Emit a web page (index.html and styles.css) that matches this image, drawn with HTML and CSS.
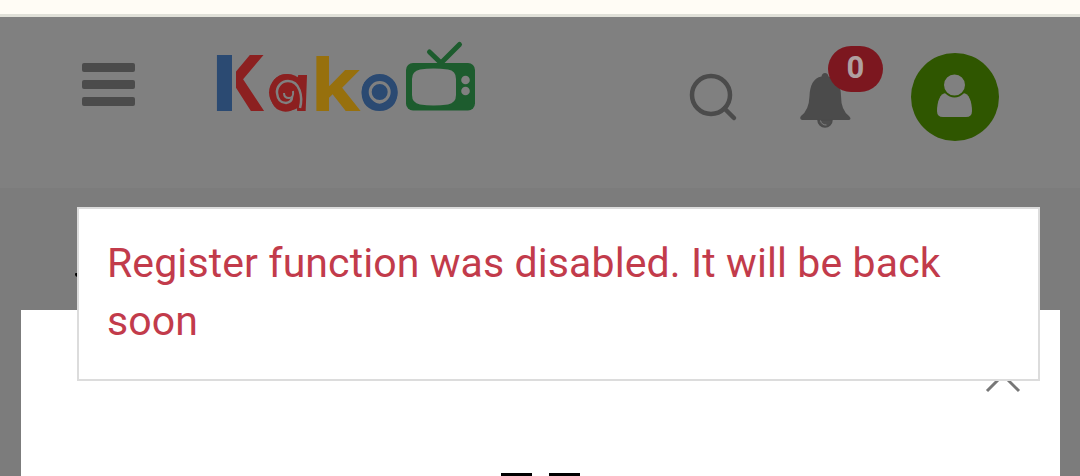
FILE: index.html
```
<!DOCTYPE html>
<html lang="en">
<head>
    <meta charset="UTF-8">
    <meta name="viewport" content="width=device-width, initial-scale=1.0">
    <title>Kako TV</title>
    <link rel="stylesheet" href="styles.css">
</head>
<body>

    <div class="top-strip"></div>

    <header>
        <div class="menu-button">
            <span></span>
            <span></span>
            <span></span>
        </div>

        <svg class="logo" width="277" height="125" viewBox="205 17 277 125">
            <defs>
                <linearGradient id="twoTone" gradientUnits="userSpaceOnUse" x1="217" y1="0" x2="265" y2="0">
                    <stop offset="0.32" stop-color="#2b4a72"/>
                    <stop offset="0.32" stop-color="#808080"/>
                    <stop offset="0.4" stop-color="#808080"/>
                    <stop offset="0.4" stop-color="#8c2020"/>
                </linearGradient>
            </defs>
            <g class="logo-text">
                <text x="212" y="111" font-size="77" textLength="54" lengthAdjust="spacingAndGlyphs" fill="url(#twoTone)">K</text>
                <text class="round-a" transform="translate(270 110.500) skewX(12)" font-size="66" textLength="46" lengthAdjust="spacingAndGlyphs" fill="#8c2020">a</text>
                <text x="311" y="111" font-size="75" textLength="50" lengthAdjust="spacingAndGlyphs" fill="#97700d">k</text>
                <text x="359" y="110" font-size="64" textLength="41" lengthAdjust="spacingAndGlyphs" fill="#2b4a72">o</text>
            </g>
            <rect x="217" y="55" width="15" height="56" fill="#2b4a72"/>
            <!-- swirl inside the a -->
            <circle cx="287.500" cy="92.500" r="18.500" fill="#8c2020"/>
            <path d="M300 108C303 97 300 81 288 81A11 11 0 0 0 277 93Q278 103 286 103Q292 102 292 97" fill="none" stroke="#808080" stroke-width="2.500"/>
            <path d="M284 93q0 5 5 5t4-7" fill="none" stroke="#808080" stroke-width="2"/>
            <circle cx="379.700" cy="92" r="15" fill="none" stroke="#2b4a72" stroke-width="6"/>
            <circle cx="379.700" cy="92" r="9.500" fill="#2b4a72" stroke="#808080" stroke-width="3"/>
            <path d="M429.500 52L441 63L459.500 44.500" fill="none" stroke="#1d5c2e" stroke-width="5" stroke-linecap="round"/>
            <rect x="406" y="63" width="69" height="47.500" rx="7" fill="#1d5c2e"/>
            <path d="M420 69.500Q433 67.500 448 69.500Q456 70.500 456 79V95Q456 103 448 104.500Q433 106.500 420 104.500Q412 103 412 95V79Q412 71 420 69.500Z" fill="#808080"/>
            <circle cx="465.500" cy="80" r="4.300" fill="#808080"/>
            <circle cx="465.500" cy="91" r="4.300" fill="#808080"/>
        </svg>

        <svg class="search" width="52" height="52" viewBox="688 72 52 52">
            <circle cx="711" cy="95" r="19" fill="none" stroke="#4b4b4b" stroke-width="4.500"/>
            <path d="M724.500 108.500L734 118" stroke="#4b4b4b" stroke-width="4.500" stroke-linecap="round"/>
        </svg>

        <div class="notifications">
            <svg width="52" height="58" viewBox="799 71 52 58">
                <path d="M825 73q3 0 3.500 3.500C838 78 841 86 841 96Q841 110 849 116Q852 119 849 120H802Q799 119 801 116Q809 110 809.500 96C810 86 813 78 821.500 76.500Q822 73 825 73Z" fill="#4b4b4b"/>
                <path d="M818 120a7 7 0 0 0 14 0z" fill="#4f4f4f" stroke="#4b4b4b" stroke-width="1.500"/>
                <path d="M820.500 120.500q1 4.500 6 4.500" fill="none" stroke="#808080" stroke-width="1"/>
            </svg>
            <span class="badge">0</span>
        </div>

        <div class="avatar">
            <svg width="36" height="46" viewBox="937 73 36 46">
                <path d="M946 93H963C969 93 972 102 972 111Q972 117 966 117H943Q937 117 937 111C937 102 940 93 946 93Z" fill="#808080"/>
                <circle cx="954.500" cy="85" r="11.500" fill="#808080" stroke="#2f5600" stroke-width="2"/>
            </svg>
        </div>
    </header>

    <main>
        <span class="heading-mark"></span>
        <div class="panel">
            <div class="panel-title"><span></span><span></span></div>
        </div>
        <svg class="collapse" width="38" height="22" viewBox="0 0 38 22">
            <path d="M3 19L19 3L35 19" fill="none" stroke="#777" stroke-width="3"/>
        </svg>
        <div class="message">Register function was disabled. It will be back soon</div>
    </main>

</body>
</html>
```
FILE: styles.css
```
* {
    box-sizing: border-box;
}

body {
    margin: 0;
    height: 476px;
    overflow: hidden;
    background-color: #7c7c7c;
    font-family: Roboto, sans-serif;
}

.top-strip {
    height: 17px;
    background-color: #fffcf5;
    border-bottom: 3px solid #e0e0d8;
}

header {
    display: flex;
    align-items: flex-start;
    height: 171px;
    padding-left: 82px;
    background-color: #808080;
}

.menu-button {
    display: flex;
    flex-direction: column;
    gap: 8px;
    width: 53px;
    margin-top: 46px;
}

.menu-button span {
    height: 9px;
    border-radius: 2px;
    background-color: #4b4b4b;
}

.logo {
    margin-left: 70px;
    overflow: visible;
}

.logo-text {
    font-family: Inter, sans-serif;
    font-weight: 700;
}

.round-a {
    font-family: "Open Sans", sans-serif;
    font-style: italic;
}

.search {
    margin: 55px 0 0 206px;
}

.notifications {
    position: relative;
    width: 52px;
    margin: 54px 0 0 59px;
}

.notifications svg {
    display: block;
}

.badge {
    position: absolute;
    top: -25px;
    left: 29px;
    width: 55px;
    height: 46px;
    border-radius: 23px;
    background-color: #7c171f;
    color: #b0a0a0;
    font-size: 31px;
    font-weight: 700;
    line-height: 44px;
    text-align: center;
}

.avatar {
    display: flex;
    justify-content: center;
    width: 88px;
    height: 88px;
    margin: 36px 0 0 60px;
    padding-top: 20px;
    border-radius: 50%;
    background-color: #2f5600;
}

main {
    position: relative;
    height: 288px;
    padding: 122px 20px 0 21px;
}

.heading-mark {
    position: absolute;
    top: 85px;
    left: 75px;
    width: 5px;
    height: 4px;
    border-radius: 1px 0 0 3px;
    background-color: #000;
}

.panel {
    height: 166px;
    padding-top: 163px;
    background-color: #fff;
}

.panel-title {
    display: flex;
    gap: 17px;
    padding-left: 480px;
}

.panel-title span {
    width: 31px;
    height: 3px;
    background-color: #000;
}

.collapse {
    position: absolute;
    top: 184px;
    left: 984px;
}

.message {
    position: absolute;
    top: 19px;
    left: 77px;
    width: 963px;
    height: 174px;
    padding: 25px 28px;
    border: 2px solid #dcdcdc;
    background-color: #fff;
    color: #c23b4b;
    font-size: 41px;
    letter-spacing: 0.1px;
    line-height: 58px;
}
```
